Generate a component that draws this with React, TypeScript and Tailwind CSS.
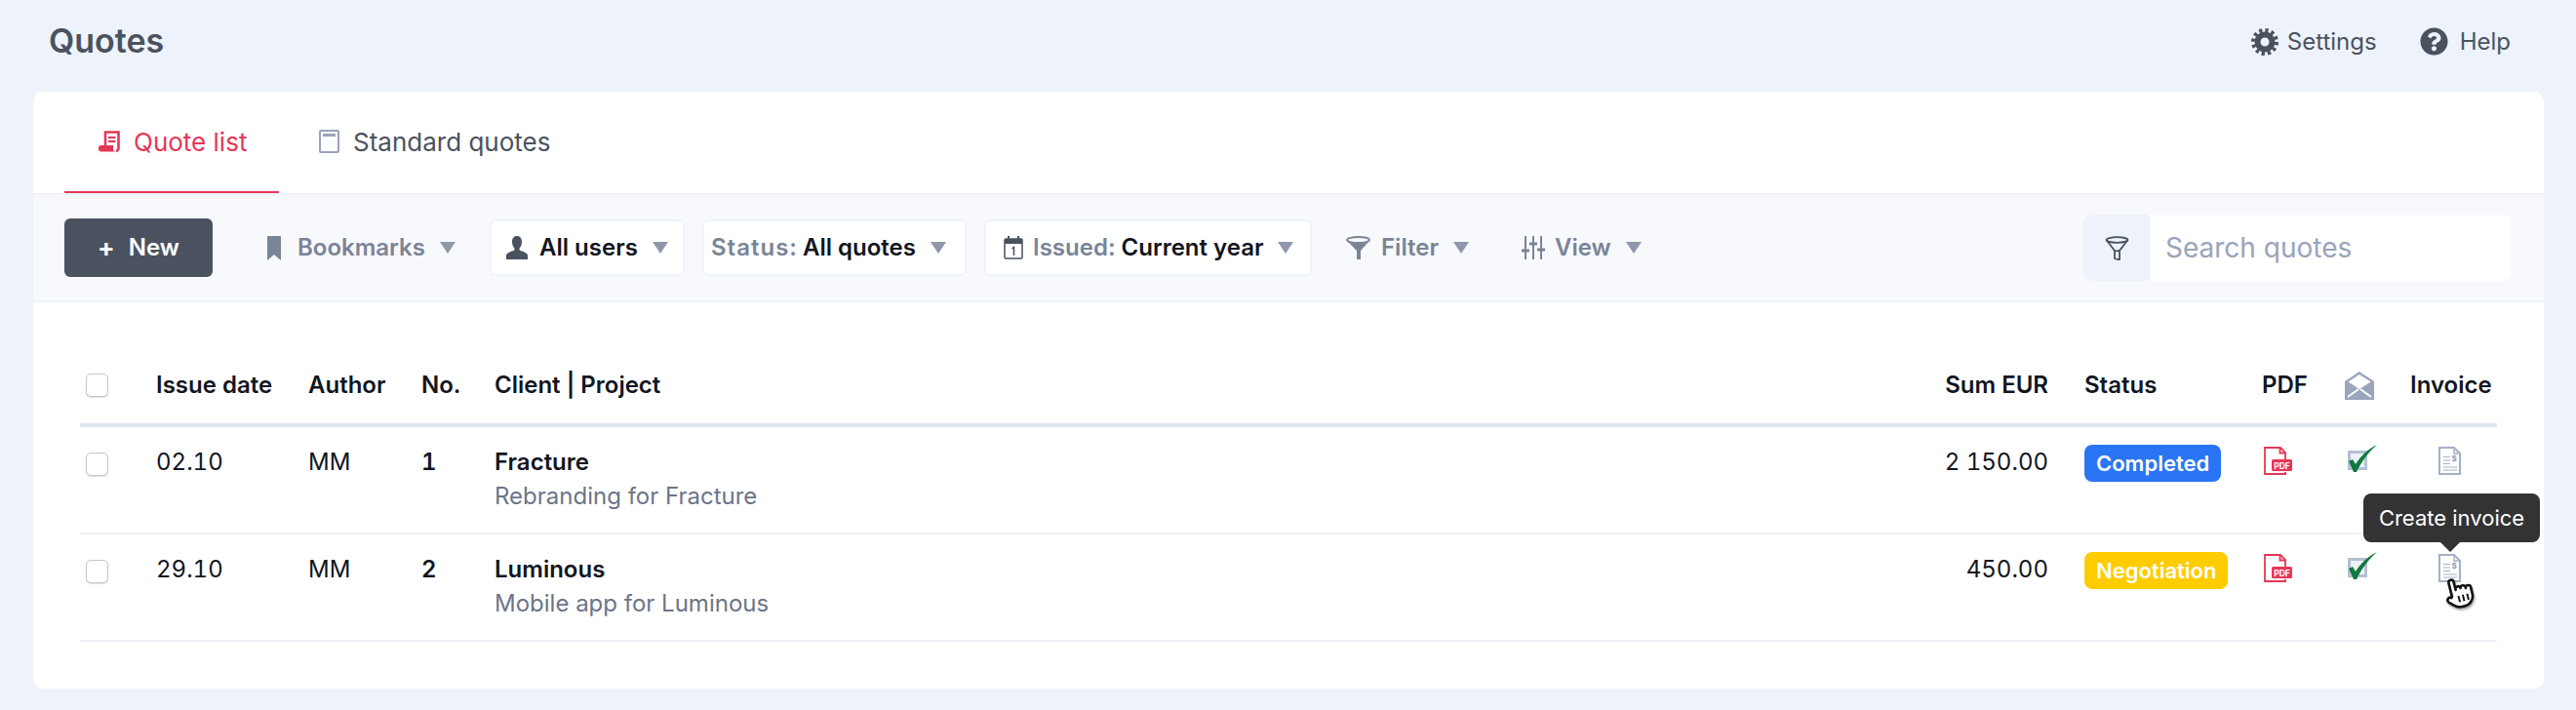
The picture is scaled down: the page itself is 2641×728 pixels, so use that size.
import { FaQuestionCircle } from 'react-icons/fa';

const font = { fontFamily: 'Inter, "Noto Sans", sans-serif' };

function Caret() {
  return <span className="ml-[15px] inline-block h-0 w-0 border-x-[8px] border-t-[12px] border-x-transparent border-t-[#8f98ab]" />;
}

function ScrollIcon() {
  return (
    <svg width="22" height="22" viewBox="0 0 22 22" fill="none">
      <path d="M7 15V1.500h13.500V18a3 3 0 0 1-2.500 3" stroke="#e63757" strokeWidth="2.600" />
      <path d="M10 7h7.500M10 11h7.500" stroke="#e63757" strokeWidth="2.200" />
      <path d="M3 15h12v3a3 3 0 0 0 3 3.500H3a3 3 0 0 1-3-3v-1a2.500 2.500 0 0 1 3-2.500z" fill="#e63757" />
    </svg>
  );
}

function BookIcon() {
  return (
    <svg width="21" height="24" viewBox="0 0 21 24" fill="none">
      <rect x="1" y="1" width="19" height="22" rx="1" stroke="#98a4ba" strokeWidth="2" />
      <rect x="4" y="4" width="13" height="3" fill="#98a4ba" />
    </svg>
  );
}

function BookmarkIcon() {
  return (
    <svg width="14" height="25" viewBox="0 0 14 25">
      <path d="M0 1a1 1 0 0 1 1-1h12a1 1 0 0 1 1 1v24l-7-6-7 6z" fill="#7a8497" />
    </svg>
  );
}

function UserIcon() {
  return (
    <svg width="24" height="24" viewBox="0 0 24 24">
      <path d="M12 0c3.400 0 5 2.600 5 6 0 2.600-1 5-2.400 6.400v2.200c2.600 1.200 7.400 2.200 8.400 5V24H1v-4.400c1-2.800 5.800-3.800 8.400-5v-2.200C8 11 7 8.600 7 6c0-3.400 1.600-6 5-6z" fill="#4a5260" />
    </svg>
  );
}

function CalendarIcon() {
  return (
    <svg width="20" height="24" viewBox="0 0 20 24" fill="none">
      <rect x="1" y="3" width="18" height="20" rx="1" stroke="#4a5260" strokeWidth="1.500" />
      <rect x="1" y="3" width="18" height="5" fill="#4a5260" />
      <path d="M5 0v4M15 0v4" stroke="#4a5260" strokeWidth="2" />
      <path d="M8.500 13l2-1.500V20" stroke="#4a5260" strokeWidth="1.500" />
    </svg>
  );
}

function FunnelSolid() {
  return (
    <svg width="25" height="24" viewBox="0 0 25 24" fill="none">
      <ellipse cx="12.500" cy="4" rx="11.500" ry="3" stroke="#7a8497" strokeWidth="1.800" />
      <path d="M2 6c3 2 18 2 21 0l-8 9v9h-4v-9z" fill="#7a8497" />
    </svg>
  );
}

function SlidersIcon() {
  return (
    <svg width="24" height="24" viewBox="0 0 24 24" fill="none" stroke="#7a8497" strokeWidth="2">
      <path d="M4 0v24M12 0v24M20 0v24" />
      <path d="M0 15h8M8 8h8M16 14h8" strokeWidth="3" />
    </svg>
  );
}

function FunnelOutline() {
  return (
    <svg width="25" height="25" viewBox="0 0 25 25" fill="none" stroke="#4a5260" strokeWidth="1.800" strokeLinejoin="round">
      <ellipse cx="12.500" cy="4" rx="11" ry="2.800" />
      <path d="M1.500 4l8.500 11v8l5 1.500V15l8.500-11" />
      <path d="M10 15c2 1 3.500 0 5 0" />
    </svg>
  );
}

function GearIcon() {
  return (
    <svg width="28" height="28" viewBox="0 0 28 28" fill="none" stroke="#4a5260">
      <circle cx="14" cy="14" r="7.500" strokeWidth="6" />
      <circle cx="14" cy="14" r="12" strokeWidth="4" strokeDasharray="3.280 3" />
    </svg>
  );
}

function EnvelopeIcon() {
  return (
    <svg width="30" height="29" viewBox="0 0 30 29">
      <path d="M0 10L15 0l15 10v19H0z" fill="#9ba6bc" />
      <path d="M3.500 10.500L15 3l11.500 7.500L15 18z" fill="#fff" />
      <path d="M3 26l11-8M27 26l-11-8" stroke="#fff" strokeWidth="2" />
    </svg>
  );
}

function PdfIcon() {
  return (
    <svg width="29" height="29" viewBox="0 0 29 29" fill="none">
      <path d="M22 13V6l-5-5H1v27h21v-2" stroke="#e63757" strokeWidth="1.800" />
      <path d="M16.500 1v5.500H22" stroke="#e63757" strokeWidth="1.800" />
      <rect x="8" y="13" width="21" height="12" rx="1.500" fill="#e63757" />
      <text x="18.500" y="22.500" textAnchor="middle" fontSize="8.500" fontWeight="700" fill="#fff" fontFamily="Inter, sans-serif">PDF</text>
    </svg>
  );
}

function CheckIcon() {
  return (
    <svg width="30" height="28" viewBox="0 0 30 28" fill="none">
      <rect x="1.500" y="7.500" width="17" height="17" stroke="#b5bfd3" strokeWidth="3" fill="#eef1f7" />
      <path d="M1 17l4-2 3 5C13 12 21 4 30 0 22 7 14 17 9 28H6z" fill="#0f7a3d" />
    </svg>
  );
}

function InvoiceIcon() {
  return (
    <svg width="23" height="29" viewBox="0 0 23 29" fill="none">
      <path d="M1 1h15l6 6v21H1z" stroke="#a5b0c5" strokeWidth="2" fill="#fff" />
      <path d="M16 1v6h6" stroke="#a5b0c5" strokeWidth="1.500" />
      <path d="M5 10.500h7M5 14h7M5 17.500h7M5 21h14M5 24h14" stroke="#a5b0c5" strokeWidth="1.200" />
      <text x="16" y="15" textAnchor="middle" fontSize="8" fontWeight="700" fill="#8d99b0" fontFamily="Inter, sans-serif">$</text>
    </svg>
  );
}

function HandCursor() {
  return (
    <svg width="34" height="38" viewBox="0 0 26 28" fill="none" style={{ filter: 'drop-shadow(1px 2px 1px rgba(0,0,0,.35))' }}>
      <g transform="rotate(-14 13 14)">
        <path d="M8 15V4a2 2 0 0 1 4 0v6.500a2 2 0 0 1 4-.500a2 2 0 0 1 4 1a2 2 0 0 1 4 .500v5a8 8 0 0 1-8 8h-2c-2.800 0-4.500-.860-6-2.340l-3.600-3.600a2 2 0 0 1 2.830-2.820z" fill="#fff" stroke="#111" strokeWidth="2" strokeLinejoin="round" />
        <path d="M13 15.500v5M16.500 15.500v5M20 15.500v5" stroke="#111" strokeWidth="1.500" />
      </g>
    </svg>
  );
}

function Checkbox() {
  return <span className="block h-[24px] w-[23px] rounded-[5px] border border-[#c3c7cd] bg-white shadow-[0_1px_1px_rgba(0,0,0,0.12)]" />;
}

const gridCols = 'grid grid-cols-[78px_156px_116px_75px_1fr_237px_182px_85px_67px_89px]';

const rows = [
  { date: '02.10', author: 'MM', no: '1', client: 'Fracture', project: 'Rebranding for Fracture', sum: '2 150.00', status: 'Completed', color: 'bg-[#2a75f3]' },
  { date: '29.10', author: 'MM', no: '2', client: 'Luminous', project: 'Mobile app for Luminous', sum: '450.00', status: 'Negotiation', color: 'bg-[#ffcc00]' },
];

export default function App() {
  return (
    <div className="h-[728px] w-full overflow-hidden bg-[#eef3fb] text-[24px] text-[#12161f]" style={font}>
      {/* Header */}
      <div className="flex h-[94px] items-start justify-between pl-[50px] pr-[67px]">
        <h1 className="mt-[21px] text-[34px] leading-[42px] font-semibold text-[#4a5260]">Quotes</h1>
        <div className="mt-[28px] flex items-center text-[#4a5260]">
          <GearIcon />
          <span className="ml-[9px] leading-[28px]">Settings</span>
          <FaQuestionCircle className="ml-[44px] text-[29px]" />
          <span className="ml-[12px] leading-[28px]">Help</span>
        </div>
      </div>

      {/* Card */}
      <div className="mx-[34px] h-[612px] w-[2574px] overflow-hidden rounded-[10px] bg-white">
        {/* Tabs */}
        <div className="flex h-[104px] pl-[32px]">
          <div className="flex w-[220px] items-center border-b-2 border-[#e63757] pl-[35px] text-[26px] text-[#e63757]">
            <ScrollIcon />
            <span className="ml-[14px]">Quote list</span>
          </div>
          <div className="ml-[41px] flex items-center pb-[2px] text-[26px] text-[#4a5260]">
            <BookIcon />
            <span className="ml-[14px]">Standard quotes</span>
          </div>
        </div>

        {/* Toolbar */}
        <div className="flex h-[112px] items-center border-y-2 border-[#eef2f9] bg-[#f7f9fd] pl-[32px] pr-[34px] font-semibold">
          <button className="flex h-[60px] w-[152px] items-center justify-center rounded-[6px] bg-[#4a5260] text-white">
            <span className="mr-[14px] text-[26px] leading-none font-bold">+</span>New
          </button>
          <div className="ml-[56px] flex w-[194px] items-center text-[#7a8497]">
            <BookmarkIcon />
            <span className="ml-[17px]">Bookmarks</span>
            <Caret />
          </div>
          <div className="ml-[34px] flex h-[58px] w-[200px] items-center rounded-[6px] border-2 border-[#eff3fa] bg-white pl-[14px]">
            <UserIcon />
            <span className="ml-[11px]">All users</span>
            <Caret />
          </div>
          <div className="ml-[18px] flex h-[58px] w-[271px] items-center rounded-[6px] border-2 border-[#eff3fa] bg-white pl-[7px]">
            <span className="tracking-[1px] text-[#7a8497]">Status:</span>
            <span className="ml-[5px]">All quotes</span>
            <Caret />
          </div>
          <div className="ml-[18px] flex h-[58px] w-[336px] items-center rounded-[6px] border-2 border-[#eff3fa] bg-white pl-[18px]">
            <CalendarIcon />
            <span className="ml-[10px] text-[#7a8497]">Issued:</span>
            <span className="ml-[6px]">Current year</span>
            <Caret />
          </div>
          <div className="ml-[35px] flex w-[126px] items-center text-[#7a8497]">
            <FunnelSolid />
            <span className="ml-[11px]">Filter</span>
            <Caret />
          </div>
          <div className="ml-[54px] flex items-center text-[#7a8497]">
            <SlidersIcon />
            <span className="ml-[10px]">View</span>
            <Caret />
          </div>
          <div className="ml-auto flex h-[68px] w-[438px] overflow-hidden rounded-[8px] bg-white">
            <div className="flex w-[68px] items-center justify-center bg-[#eef3fb]">
              <FunnelOutline />
            </div>
            <div className="flex items-center pl-[16px] text-[28px] font-normal text-[#98a4ba]">Search quotes</div>
          </div>
        </div>

        {/* Table */}
        <div className="mx-[48px] pt-[60px]">
          <div className={`${gridCols} h-[68px] items-start border-b-4 border-[#dfe6f2] font-semibold`}>
            <div className="flex h-[50px] items-center pl-[6px]"><Checkbox /></div>
            <div className="leading-[50px]">Issue date</div>
            <div className="leading-[50px]">Author</div>
            <div className="leading-[50px]">No.</div>
            <div className="leading-[50px]">Client | Project</div>
            <div className="pr-[37px] text-right leading-[50px]">Sum EUR</div>
            <div className="leading-[50px]">Status</div>
            <div className="leading-[50px]">PDF</div>
            <div className="flex h-[50px] items-center"><EnvelopeIcon /></div>
            <div className="leading-[50px]">Invoice</div>
          </div>

          {rows.map((row, i) => (
            <div key={row.no} className={`${gridCols} h-[110px] border-b-2 border-[#eef2f9]`}>
              <div className="pl-[6px] pt-[26px]"><Checkbox /></div>
              <div className="pt-[21px] leading-[30px] tabular-nums">{row.date}</div>
              <div className="pt-[21px] leading-[30px]">{row.author}</div>
              <div className="pt-[21px] leading-[30px] font-semibold tabular-nums">{row.no}</div>
              <div className="pt-[21px]">
                <div className="leading-[30px] font-semibold">{row.client}</div>
                <div className="mt-[5px] leading-[30px] text-[#6b7588]">{row.project}</div>
              </div>
              <div className="pr-[37px] pt-[21px] text-right leading-[30px] tabular-nums">{row.sum}</div>
              <div className="pt-[18px]">
                <span className={`${row.color} inline-block h-[38px] rounded-[8px] px-[12px] text-[22px] leading-[38px] font-semibold text-white`}>{row.status}</span>
              </div>
              <div className="pl-[2px] pt-[20px]"><PdfIcon /></div>
              <div className="pl-[3px] pt-[18px]"><CheckIcon /></div>
              <div className="relative pl-[29px] pt-[20px]">
                <InvoiceIcon />
                {i === 1 && (
                  <>
                    <div className="absolute left-[-48px] top-[-42px] flex h-[50px] w-[181px] items-center justify-center rounded-[8px] bg-[#333333] text-[22px] text-white">
                      Create invoice
                    </div>
                    <div className="absolute left-[31px] top-[8px] h-0 w-0 border-x-[10px] border-t-[10px] border-x-transparent border-t-[#333333]" />
                    <div className="absolute left-[32px] top-[42px]"><HandCursor /></div>
                  </>
                )}
              </div>
            </div>
          ))}
        </div>
      </div>
    </div>
  );
}
